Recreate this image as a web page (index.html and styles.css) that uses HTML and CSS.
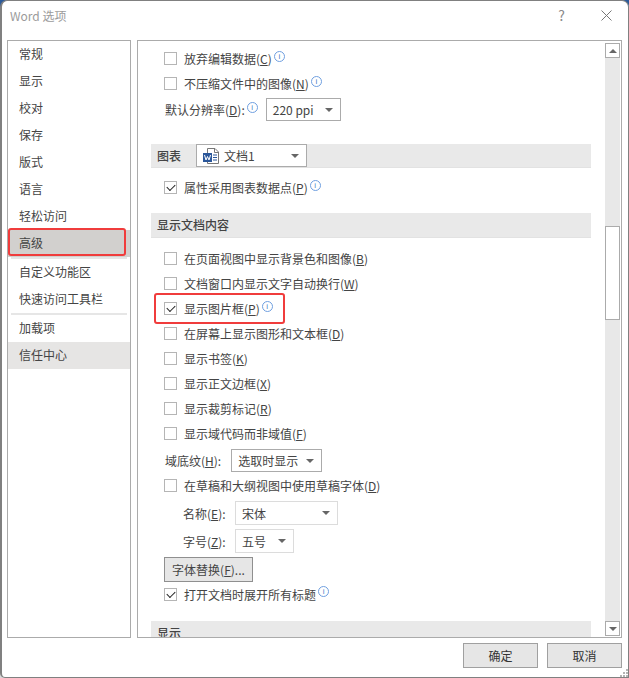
FILE: index.html

```html
<!DOCTYPE html>
<html lang="zh-CN">
<head>
  <meta charset="UTF-8">
  <title>Word 选项</title>
  <link rel="stylesheet" href="styles.css">
</head>
<body>

  <div class="dialog">
    <div class="titlebar">
      <span class="title">Word 选项</span>
      <span class="help">?</span>
      <svg class="close" width="11" height="11" viewBox="0 0 11 11"><path d="M0.5 0.5L10.5 10.5M10.5 0.5L0.5 10.5" stroke="#777" fill="none"/></svg>
    </div>

    <div class="panels">
      <ul class="nav">
        <li>常规</li>
        <li>显示</li>
        <li>校对</li>
        <li>保存</li>
        <li>版式</li>
        <li>语言</li>
        <li>轻松访问</li>
        <li class="current">高级</li>
        <li class="sep"></li>
        <li>自定义功能区</li>
        <li>快速访问工具栏</li>
        <li class="sep"></li>
        <li>加载项</li>
        <li class="hover">信任中心</li>
      </ul>

      <div class="main">
        <div class="content">
          <div class="row"><span class="cb"></span><span>放弃编辑数据(<u>C</u>)</span><span class="info">i</span></div>
          <div class="row"><span class="cb"></span><span>不压缩文件中的图像(<u>N</u>)</span><span class="info">i</span></div>
          <div class="row field res">
            <span>默认分辨率(<u>D</u>):</span><span class="info">i</span>
            <span class="select w-ppi">220 ppi<i class="arrow"></i></span>
          </div>

          <div class="section chart">
            <span>图表</span>
            <span class="select w-doc">
              <svg class="docicon" width="17" height="16" viewBox="0 0 17 16">
                <path d="M4.5 .5H12L15.5 4V15.5H4.5Z" fill="#fff" stroke="#777"/>
                <path d="M11.5 .5V4.5H15.5" fill="none" stroke="#777"/>
                <path d="M10 7H14M10 9.5H14M10 12H14" stroke="#2b579a"/>
                <rect x="0" y="5" width="9" height="9" fill="#2b579a"/>
                <path d="M1.5 7L3 12L4.5 8.5L6 12L7.5 7" fill="none" stroke="#fff"/>
              </svg>
              文档1<i class="arrow"></i>
            </span>
          </div>
          <div class="row after-chart"><span class="cb on"></span><span>属性采用图表数据点(<u>P</u>)</span><span class="info">i</span></div>

          <div class="section docs">显示文档内容</div>
          <div class="row first"><span class="cb"></span><span>在页面视图中显示背景色和图像(<u>B</u>)</span></div>
          <div class="row"><span class="cb"></span><span>文档窗口内显示文字自动换行(<u>W</u>)</span></div>
          <div class="row"><span class="cb on"></span><span>显示图片框(<u>P</u>)</span><span class="info">i</span></div>
          <div class="row"><span class="cb"></span><span>在屏幕上显示图形和文本框(<u>D</u>)</span></div>
          <div class="row"><span class="cb"></span><span>显示书签(<u>K</u>)</span></div>
          <div class="row"><span class="cb"></span><span>显示正文边框(<u>X</u>)</span></div>
          <div class="row"><span class="cb"></span><span>显示裁剪标记(<u>R</u>)</span></div>
          <div class="row"><span class="cb"></span><span>显示域代码而非域值(<u>F</u>)</span></div>
          <div class="row field shade">
            <span>域底纹(<u>H</u>):</span>
            <span class="select w-shade">选取时显示<i class="arrow"></i></span>
          </div>
          <div class="row draft"><span class="cb"></span><span>在草稿和大纲视图中使用草稿字体(<u>D</u>)</span></div>
          <div class="row field sub">
            <span class="sub-label">名称(<u>E</u>):</span>
            <span class="select off w-name">宋体<i class="arrow"></i></span>
          </div>
          <div class="row field sub">
            <span class="sub-label">字号(<u>Z</u>):</span>
            <span class="select off w-size">五号<i class="arrow"></i></span>
          </div>
          <div class="row replace"><span class="btn small">字体替换(<u>F</u>)...</span></div>
          <div class="row open"><span class="cb on"></span><span>打开文档时展开所有标题</span><span class="info">i</span></div>
          <div class="section last">显示</div>
        </div>

        <div class="scrollbar">
          <span class="sbtn"><i class="arrow up"></i></span>
          <span class="track"><span class="thumb"></span></span>
          <span class="sbtn"><i class="arrow"></i></span>
        </div>
      </div>
    </div>

    <div class="footer">
      <span class="btn">确定</span>
      <span class="btn">取消</span>
    </div>

    <svg class="grip" width="9" height="9" viewBox="0 0 9 9">
      <path d="M7 1h2v2H7zM4 4h2v2H4zM7 4h2v2H7zM1 7h2v2H1zM4 7h2v2H4zM7 7h2v2H7z" fill="#b4b4b4"/>
    </svg>

    <div class="mark mark-nav"></div>
    <div class="mark mark-row"></div>
  </div>

</body>
</html>
```

FILE: styles.css

```css
* {
  box-sizing: border-box;
}

html, body {
  margin: 0;
  height: 100%;
}

body {
  font-family: "Noto Sans CJK SC", "Noto Sans", sans-serif;
  font-size: 12px;
  color: #444;
  background: linear-gradient(#2b5a9a 0, #2b5a9a 30px, #d8d8d8 30px);
  overflow: hidden;
}

u {
  text-underline-offset: 1px;
}

.dialog {
  position: relative;
  width: 629px;
  height: 678px;
  display: flex;
  flex-direction: column;
  background: #fff;
  border: 1px solid #808080;
  border-left-width: 2px;
  border-radius: 7px 7px 0 5px;
}

.titlebar {
  height: 39px;
  display: flex;
  align-items: center;
  flex-shrink: 0;
  padding: 0 16px 11px 8px;
}

.title {
  flex: 1;
  color: #9b9b9b;
}

.help {
  color: #8a8a8a;
  font-size: 14px;
  margin-right: 36px;
}

.panels {
  display: flex;
  gap: 6px;
  height: 598px;
  padding: 0 6px 0 5px;
  flex-shrink: 0;
}

/* left list */
.nav {
  width: 124px;
  margin: 0;
  padding: 0;
  list-style: none;
  border: 1px solid #ababab;
  flex-shrink: 0;
}

.nav li {
  height: 27px;
  line-height: 26px;
  padding-left: 11px;
}

.nav li.current {
  background: #d2d0ce;
}

.nav li.hover {
  background: #e6e5e4;
}

.nav li.sep {
  height: 2px;
  margin: 0 3px;
  padding: 0;
  background: #e6e6e6;
}

/* right panel */
.main {
  flex: 1;
  display: flex;
  border: 1px solid #ababab;
  overflow: hidden;
}

.content {
  flex: 1;
  padding: 5px 14px 0 13px;
  overflow: hidden;
}

.row {
  height: 25px;
  display: flex;
  align-items: center;
  padding-left: 13px;
}

.field {
  padding-left: 14px;
}

.res {
  height: 27px;
  margin-bottom: 21px;
}

.after-chart {
  margin: 7px 0 13px;
}

.first {
  margin-top: 8px;
}

.shade {
  height: 28px;
}

.draft {
  height: 22px;
}

.sub {
  height: 28px;
  padding-left: 32px;
}

.draft + .sub {
  margin-top: 3px;
}

.sub-label {
  width: 52px;
  flex-shrink: 0;
}

.replace {
  height: 28px;
}

.open {
  height: 22px;
}

.cb {
  width: 13px;
  height: 13px;
  margin-right: 7px;
  border: 1px solid #b5b5b5;
  background: #fff;
  flex-shrink: 0;
  position: relative;
}

.cb.on::after {
  content: "";
  position: absolute;
  left: 2px;
  top: 2px;
  width: 7px;
  height: 4px;
  border-left: 1px solid #222;
  border-bottom: 1px solid #222;
  transform: rotate(-45deg);
}

.info {
  width: 11px;
  height: 11px;
  margin: -5px 0 0 2px;
  border: 1px solid #6f9fe0;
  border-radius: 50%;
  color: #4a7fc8;
  font: 8px/9px "Liberation Sans", sans-serif;
  text-align: center;
  flex-shrink: 0;
}

.section {
  background: #e9e9e9;
  border-bottom: 1px solid #e2e2e2;
  height: 24px;
  padding-left: 6px;
  display: flex;
  align-items: center;
  font-weight: 500;
}

.chart {
  gap: 15px;
  align-items: flex-start;
}

.chart > span:first-child {
  line-height: 23px;
}

.docs {
  height: 25px;
  padding-bottom: 2px;
}

.last {
  margin-top: 16px;
}

.select {
  position: relative;
  display: flex;
  align-items: center;
  height: 23px;
  padding-left: 6px;
  background: #fff;
  border: 1px solid #ababab;
  font-weight: 400;
  flex-shrink: 0;
}

.select.off {
  border-color: #dcdcdc;
}

.select .arrow {
  position: absolute;
  right: 7px;
  top: 9px;
}

.w-ppi { width: 75px; margin-left: 8px; }
.w-doc { width: 111px; gap: 4px; }
.w-shade { width: 91px; margin-left: 10px; }
.w-name { width: 103px; height: 24px; }
.w-size { width: 59px; height: 24px; }

.docicon {
  flex-shrink: 0;
}

.arrow {
  display: block;
  width: 0;
  height: 0;
  border-left: 4px solid transparent;
  border-right: 4px solid transparent;
  border-top: 4px solid #666;
}

.arrow.up {
  border-top: 0;
  border-bottom: 4px solid #666;
}

/* scrollbar */
.scrollbar {
  width: 15px;
  margin: 2px 1px 1px 0;
  display: flex;
  flex-direction: column;
  background: #e8e8e8;
  flex-shrink: 0;
}

.sbtn {
  height: 15px;
  background: #fff;
  border: 1px solid #ababab;
  display: flex;
  align-items: center;
  justify-content: center;
  flex-shrink: 0;
}

.track {
  flex: 1;
  padding-top: 168px;
}

.thumb {
  display: block;
  height: 94px;
  background: #fff;
  border: 1px solid #ababab;
}

/* bottom */
.footer {
  flex: 1;
  display: flex;
  justify-content: flex-end;
  gap: 9px;
  padding: 5px 6px 0 0;
}

.btn {
  width: 75px;
  height: 25px;
  background: #e6e6e6;
  border: 1px solid #a0a0a0;
  display: flex;
  align-items: center;
  justify-content: center;
  color: #333;
}

.btn.small {
  width: 89px;
  color: #444;
  border-color: #8f8f8f;
}

.grip {
  position: absolute;
  right: 0;
  bottom: 0;
}

/* red highlight boxes */
.mark {
  position: absolute;
  border: 2px solid #f03c3c;
  border-radius: 3px;
}

.mark-nav {
  left: 6px;
  top: 227px;
  width: 118px;
  height: 28px;
}

.mark-row {
  left: 152px;
  top: 292px;
  width: 131px;
  height: 31px;
}
```
